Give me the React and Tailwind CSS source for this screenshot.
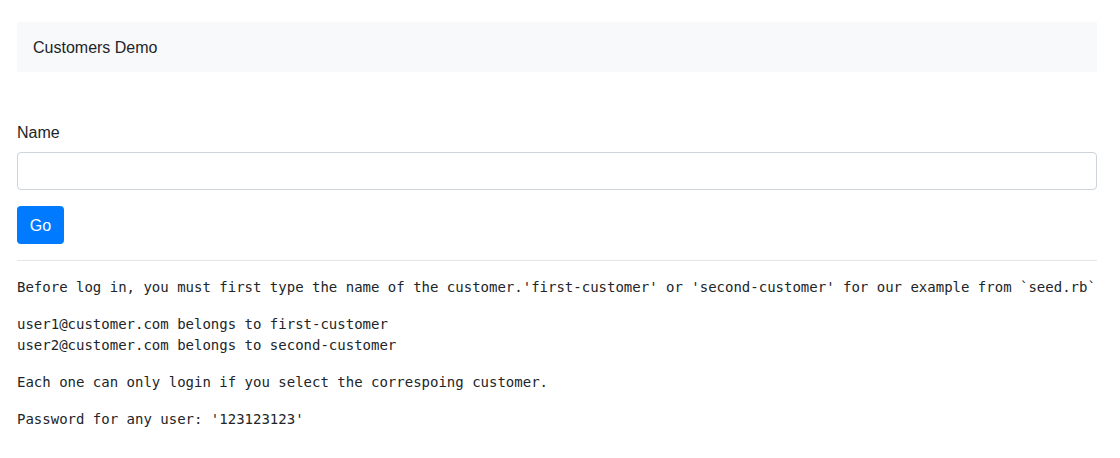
import React from 'react';

const App = () => {
  return (
    <div className="min-h-screen bg-white pl-[17px] pr-[23px] pt-[22px] text-[#212529] font-['Liberation_Sans',Arial,sans-serif]">
      {/* Navbar */}
      <nav className="h-[50px] bg-[#f8f9fa] flex items-center px-4 pt-[2px]">
        <span className="text-base leading-6">Customers Demo</span>
      </nav>

      {/* Form */}
      <form className="mt-12" onSubmit={(e) => e.preventDefault()}>
        <div className="mb-4">
          <label className="block mb-[7px] text-base leading-6 pt-[1px]">Name</label>
          <input
            type="text"
            className="block w-full h-[38px] px-3 border border-[#ced4da] rounded-[4px] text-base outline-none"
          />
        </div>
        <button
          type="submit"
          className="h-[38px] w-[47px] bg-[#007bff] text-white text-base leading-6 rounded-[4px] pt-[1px]"
        >
          Go
        </button>
      </form>

      <hr className="my-4 border-0 border-t border-[#e5e5e5]" />

      {/* Notes */}
      <div className="text-[14px] leading-[21px] text-[#212529] font-['DejaVu_Sans_Mono',monospace]">
        <p className="mb-4 whitespace-pre">
          Before log in, you must first type the name of the customer.'first-customer' or 'second-customer' for our example from `seed.rb`
        </p>
        <p className="mb-4 whitespace-pre">
          user1@customer.com belongs to first-customer
          <br />
          user2@customer.com belongs to second-customer
        </p>
        <p className="mb-4 whitespace-pre">Each one can only login if you select the correspoing customer.</p>
        <p className="mb-4 whitespace-pre">Password for any user: '123123123'</p>
      </div>
    </div>
  );
};

export default App;
